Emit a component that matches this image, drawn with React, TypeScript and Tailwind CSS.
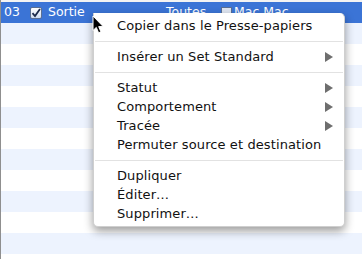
import React from "react";

const font = { fontFamily: '"DejaVu Sans", "Lucida Grande", "Noto Sans", sans-serif' };

function Arrow() {
  return (
    <svg width="8" height="10" viewBox="0 0 8 10" className="shrink-0">
      <polygon points="0,0 8,5 0,10" fill="#6e6e6e" />
    </svg>
  );
}

function Item({ label, sub }: { label: string; sub?: boolean }) {
  return (
    <div className="h-[19px] flex items-center justify-between pl-[23px] pr-[11px] text-[13px] tracking-[0.1px] text-[#111] leading-none">
      <span>{label}</span>
      {sub ? <Arrow /> : null}
    </div>
  );
}

function Sep() {
  return (
    <div className="h-[12px] flex items-center px-px">
      <div className="h-px w-full bg-[#e2e2e2]" />
    </div>
  );
}

export default function App() {
  const rows = Array.from({ length: 12 });
  return (
    <div
      className="relative w-[362px] h-[259px] overflow-hidden bg-white border-l border-[#8f8f8f]"
      style={font}
    >
      <div className="h-[2px] bg-[#f3f3f3]" />
      <div className="flex flex-col">
        <div className="h-[21px] bg-[#3b74d6] flex items-center text-white text-[12.5px] leading-none">
          <span className="w-[29px] pl-[3px]">03</span>
          <span className="w-[12px] h-[12px] rounded-[2px] bg-gradient-to-b from-white to-[#cfdcf0] border border-[#5a6f93] flex items-center justify-center">
            <svg width="10" height="10" viewBox="0 0 10 10">
              <path d="M1.5 5.2 L4 8 L9 1" stroke="#1b2a4a" strokeWidth="1.8" fill="none" />
            </svg>
          </span>
          <span className="ml-[6px] w-[118px]">Sortie</span>
          <span className="w-[55px]">Toutes</span>
          <span className="w-[11px] h-[11px] bg-[#dfe6f2] border border-[#5a6f93] mr-[2px]" />
          <span>Mac Mac</span>
        </div>
        {rows.map((_, i) => (
          <div key={i} className={`h-[21px] ${i % 2 === 0 ? "bg-[#edf3fe]" : "bg-white"}`} />
        ))}
      </div>

      <div className="absolute left-[92px] top-[13px] w-[252px] h-[214px] bg-white rounded-b-[5px] rounded-tr-[5px] shadow-[0_4px_10px_rgba(0,0,0,0.4)] border border-[#cfcfcf] border-t-0 pt-[3px]">
        <Item label="Copier dans le Presse-papiers" />
        <Sep />
        <Item label="Insérer un Set Standard" sub />
        <Sep />
        <Item label="Statut" sub />
        <Item label="Comportement" sub />
        <Item label="Tracée" sub />
        <Item label="Permuter source et destination" />
        <Sep />
        <Item label="Dupliquer" />
        <Item label="Éditer…" />
        <Item label="Supprimer…" />
      </div>

      <svg className="absolute left-[91px] top-[15px]" width="13" height="20" viewBox="0 0 13 20">
        <path
          d="M1 1 L1 15.5 L4.3 12.4 L6.6 17.8 L8.9 16.8 L6.7 11.6 L11.2 11.6 Z"
          fill="#000"
          stroke="#fff"
          strokeWidth="1"
          strokeLinejoin="round"
        />
      </svg>
    </div>
  );
}
